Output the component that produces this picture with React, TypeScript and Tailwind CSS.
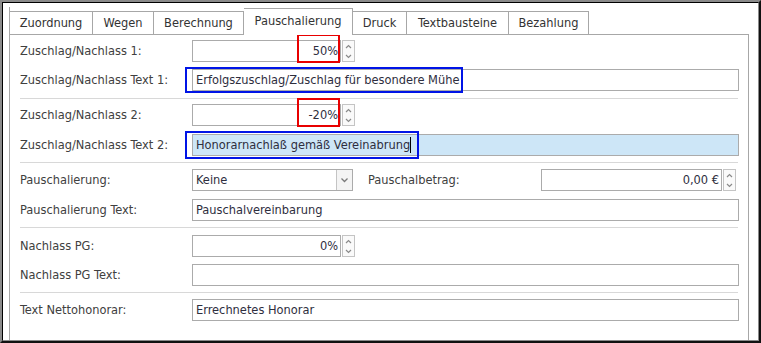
import React from "react";

const font = { fontFamily: '"DejaVu Sans Condensed", "Liberation Sans", Arial, sans-serif' };

function Spinner() {
  return (
    <div className="flex flex-col w-[13px] h-[22px] border border-[#c4c4c4] bg-[#fafafa] ml-[1px]">
      <div className="flex-1 flex items-center justify-center">
        <svg width="7" height="5" viewBox="0 0 7 5"><path d="M1 4 L3.5 1.5 L6 4" fill="none" stroke="#8a8a8a" strokeWidth="1.2" /></svg>
      </div>
      <div className="flex-1 flex items-center justify-center">
        <svg width="7" height="5" viewBox="0 0 7 5"><path d="M1 1 L3.5 3.5 L6 1" fill="none" stroke="#8a8a8a" strokeWidth="1.2" /></svg>
      </div>
    </div>
  );
}

function Label({ children }: { children: React.ReactNode }) {
  return <div className="w-[172px] shrink-0 text-[12.7px] text-[#404040] pl-[10px] box-content">{children}</div>;
}

function TextBox({ value, selected }: { value?: string; selected?: boolean }) {
  return (
    <div
      className={`w-[547px] h-[22px] border border-[#ababab] flex items-center pl-[3px] text-[12.7px] text-[#2e2e3e] ${selected ? "bg-[#cde6f7]" : "bg-white"}`}
    >
      {value}
      {selected && <span className="inline-block w-[1px] h-[16px] bg-black ml-[0px]" />}
    </div>
  );
}

function NumBox({ value, width = 149, mark }: { value: string; width?: number; mark?: boolean }) {
  return (
    <div className="relative flex">
      <div
        className="h-[22px] border border-[#ababab] bg-white flex items-center justify-end pr-[2px] text-[12.7px] text-[#2e2e3e]"
        style={{ width }}
      >
        {value}
      </div>
      <Spinner />
      {mark && <div className="absolute left-[105px] top-[-6px] w-[43px] h-[29px] border-2 border-[#e80000]" />}
    </div>
  );
}

function Sep() {
  return <div className="ml-[10px] w-[718px] h-[1px] bg-[#d8d8d8]" />;
}

function Tab({ label, w, active }: { label: string; w: number; active?: boolean }) {
  return (
    <div
      className={`flex items-center justify-center text-[12.7px] text-[#333] bg-white border-[#a7a7a7] border-t border-r ${active ? "h-[27px] mb-[-1px] relative z-10 pb-[2px]" : "h-[23px]"}`}
      style={{ width: w }}
    >
      {label}
    </div>
  );
}

export default function App() {
  return (
    <div style={font} className="w-[761px] h-[343px] bg-[#808080] p-0 overflow-hidden">
      <div className="w-[761px] h-[343px] border-t-2 border-l-2 border-[#8a8a8a] border-r-2 border-b-2 border-r-[#111] border-b-[#111]">
        <div className="w-full h-full border-t border-l border-[#000] border-r border-b border-r-[#8a8a8a] border-b-[#8a8a8a] bg-white overflow-hidden">
          <div className="pl-[6px] pt-[4px] flex flex-col">
            <div className="flex items-end border-l border-[#a7a7a7] w-[580px] h-[27px]">
              <Tab label="Zuordnung" w={83} />
              <Tab label="Wegen" w={61} />
              <Tab label="Berechnung" w={90} />
              <Tab label="Pauschalierung" w={109} active />
              <Tab label="Druck" w={54} />
              <Tab label="Textbausteine" w={102} />
              <Tab label="Bezahlung" w={80} />
            </div>
            <div className="w-[740px] h-[320px] border-l border-t border-r border-[#a7a7a7] flex flex-col">
              <div className="flex items-center mt-[5px]">
                <Label>Zuschlag/Nachlass 1:</Label>
                <NumBox value="50%" mark />
              </div>
              <div className="flex items-center mt-[7px]">
                <Label>Zuschlag/Nachlass Text 1:</Label>
                <div className="relative">
                  <TextBox value="Erfolgszuschlag/Zuschlag für besondere Mühe" />
                  <div className="absolute left-[-7px] top-[-2px] w-[278px] h-[26px] border-2 border-[#0014e6]" />
                </div>
              </div>
              <div className="mt-[7px]"><Sep /></div>
              <div className="flex items-center mt-[5px]">
                <Label>Zuschlag/Nachlass 2:</Label>
                <NumBox value="-20%" mark />
              </div>
              <div className="flex items-center mt-[8px]">
                <Label>Zuschlag/Nachlass Text 2:</Label>
                <div className="relative">
                  <TextBox value="Honorarnachlaß gemäß Vereinabrung" selected />
                  <div className="absolute left-[-7px] top-[-3px] w-[234px] h-[28px] border-2 border-[#0014e6]" />
                </div>
              </div>
              <div className="mt-[6px]"><Sep /></div>
              <div className="flex items-center mt-[6px]">
                <Label>Pauschalierung:</Label>
                <div className="flex w-[161px] h-[22px] border border-[#ababab] bg-white">
                  <div className="flex-1 flex items-center pl-[3px] text-[12.7px] text-[#2e2e3e]">Keine</div>
                  <div className="w-[16px] border-l border-[#c4c4c4] bg-[#f4f4f4] flex items-center justify-center">
                    <svg width="9" height="6" viewBox="0 0 9 6"><path d="M1.5 1.5 L4.5 4.5 L7.5 1.5" fill="none" stroke="#7a7a7a" strokeWidth="1.3" /></svg>
                  </div>
                </div>
                <div className="w-[188px] pl-[15px] text-[12.7px] text-[#404040]">Pauschalbetrag:</div>
                <NumBox value="0,00 €" width={181} />
              </div>
              <div className="flex items-center mt-[8px]">
                <Label>Pauschalierung Text:</Label>
                <TextBox value="Pauschalvereinbarung" />
              </div>
              <div className="mt-[6px]"><Sep /></div>
              <div className="flex items-center mt-[7px]">
                <Label>Nachlass PG:</Label>
                <NumBox value="0%" />
              </div>
              <div className="flex items-center mt-[7px]">
                <Label>Nachlass PG Text:</Label>
                <TextBox />
              </div>
              <div className="mt-[6px]"><Sep /></div>
              <div className="flex items-center mt-[6px]">
                <Label>Text Nettohonorar:</Label>
                <TextBox value="Errechnetes Honorar" />
              </div>
            </div>
          </div>
        </div>
      </div>
    </div>
  );
}
